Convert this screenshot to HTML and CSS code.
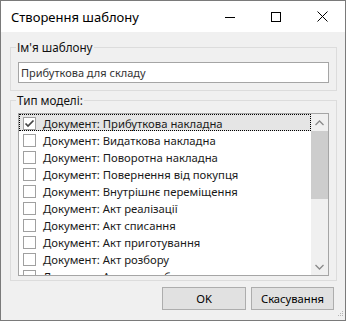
FILE: index.html
```html
<!DOCTYPE html>
<html lang="uk">
<head>
<meta charset="utf-8">
<title>Створення шаблону</title>
<link rel="stylesheet" href="styles.css">
</head>
<body>
<div class="window">
  <div class="titlebar">
    <span class="title">Створення шаблону</span>
    <div class="controls">
      <span class="ctl"><svg width="10" height="10" viewBox="0 0 10 10"><line x1="0" y1="5.5" x2="10" y2="5.5" stroke="#000" stroke-width="1"/></svg></span>
      <span class="ctl"><svg width="10" height="10" viewBox="0 0 10 10"><rect x="0.5" y="0.5" width="9" height="9" fill="none" stroke="#000" stroke-width="1"/></svg></span>
      <span class="ctl"><svg width="11" height="11" viewBox="0 0 11 11"><path d="M0.5 0.5 L10.5 10.5 M10.5 0.5 L0.5 10.5" stroke="#000" stroke-width="1" fill="none"/></svg></span>
    </div>
  </div>
  <div class="content">
    <fieldset class="group group-name">
      <legend>Ім'я шаблону</legend>
      <input class="textbox" type="text" value="Прибуткова для складу">
    </fieldset>
    <fieldset class="group group-type">
      <legend>Тип моделі:</legend>
      <div class="listbox">
        <div class="items">
          <div class="row selected"><span class="cb"><svg width="11" height="11" viewBox="0 0 11 11"><path d="M1.5 5.5 L4 8 L9.5 2.5" stroke="#444" stroke-width="1.7" fill="none"/></svg></span><span class="label">Документ: Прибуткова накладна</span></div>
          <div class="row"><span class="cb"></span><span class="label">Документ: Видаткова накладна</span></div>
          <div class="row"><span class="cb"></span><span class="label">Документ: Поворотна накладна</span></div>
          <div class="row"><span class="cb"></span><span class="label">Документ: Повернення від покупця</span></div>
          <div class="row"><span class="cb"></span><span class="label">Документ: Внутрішнє переміщення</span></div>
          <div class="row"><span class="cb"></span><span class="label">Документ: Акт реалізації</span></div>
          <div class="row"><span class="cb"></span><span class="label">Документ: Акт списання</span></div>
          <div class="row"><span class="cb"></span><span class="label">Документ: Акт приготування</span></div>
          <div class="row"><span class="cb"></span><span class="label">Документ: Акт розбору</span></div>
          <div class="row"><span class="cb"></span><span class="label">Документ: Акт переробки</span></div>
        </div>
        <div class="scrollbar">
          <div class="sb-arrow"><svg width="9" height="6" viewBox="0 0 9 6"><path d="M0.5 5 L4.5 1 L8.5 5" stroke="#8a8a8a" stroke-width="1.3" fill="none"/></svg></div>
          <div class="sb-thumb"></div>
          <div class="sb-track"></div>
          <div class="sb-arrow"><svg width="9" height="6" viewBox="0 0 9 6"><path d="M0.5 1 L4.5 5 L8.5 1" stroke="#8a8a8a" stroke-width="1.3" fill="none"/></svg></div>
        </div>
      </div>
    </fieldset>
    <div class="buttons">
      <button class="btn btn-ok" type="button">OK</button>
      <button class="btn btn-cancel" type="button">Скасування</button>
    </div>
  </div>
  <svg class="grip" width="8" height="8" viewBox="0 0 8 8">
    <rect x="6" y="0" width="1" height="1" fill="#b5b5b5"/>
    <rect x="4" y="2" width="1" height="1" fill="#b5b5b5"/>
    <rect x="6" y="2" width="1" height="1" fill="#b5b5b5"/>
    <rect x="2" y="4" width="1" height="1" fill="#b5b5b5"/>
    <rect x="4" y="4" width="1" height="1" fill="#b5b5b5"/>
    <rect x="6" y="4" width="1" height="1" fill="#b5b5b5"/>
  </svg>
</div>
</body>
</html>
```

FILE: styles.css
```css
* { box-sizing: border-box; }

html, body {
  margin: 0;
  padding: 0;
  background: #ffffff;
}

body {
  font-family: "Noto Sans", "Open Sans", sans-serif;
  font-size: 12px;
  color: #000;
}

.window {
  position: relative;
  width: 346px;
  height: 321px;
  border: 1px solid #7a7a7a;
  display: flex;
  flex-direction: column;
  background: #f0f0f0;
}

.titlebar {
  height: 31px;
  background: #ffffff;
  display: flex;
  align-items: center;
  flex-shrink: 0;
}

.title {
  padding-left: 10px;
  flex: 1;
  font-size: 13px;
  line-height: 16px;
  color: #000;
}

.controls {
  display: flex;
  height: 31px;
}

.ctl {
  width: 46px;
  height: 31px;
  display: flex;
  align-items: center;
  justify-content: center;
}

.content {
  flex: 1;
  display: flex;
  flex-direction: column;
  padding: 7px 8px 0 9px;
}

.group {
  margin: 0;
  border: 1px solid #dcdcdc;
  min-width: 0;
}

.group legend {
  padding: 0 1px;
  margin-left: -2px;
  font-size: 11.7px;
  line-height: 16px;
  height: 16px;
  color: #111;
}

.group-name {
  padding: 7px 7px 7px 7px;
}

.textbox {
  display: block;
  width: 311px;
  height: 21px;
  margin: 0;
  border: 1px solid #a5a5a5;
  padding: 0 0 0 2px;
  font-family: inherit;
  font-size: 11px;
  color: #333;
  background: #fff;
  outline: none;
}

.group-type {
  margin-top: 1px;
  padding: 5px 7px 4px 7px;
}

.listbox {
  display: flex;
  height: 163px;
  border: 1px solid #a5a5a5;
  background: #fff;
  overflow: hidden;
}

.items {
  width: 292px;
  overflow: hidden;
}

.row {
  height: 17px;
  display: flex;
  align-items: flex-start;
  padding-left: 4px;
  white-space: nowrap;
}

.row.selected {
  background: #e5e5e5;
  outline: 1px dotted #000;
  outline-offset: -1px;
}

.cb {
  width: 13px;
  height: 13px;
  margin-top: 3px;
  border: 1px solid #a0a0a0;
  background: #fff;
  display: flex;
  align-items: center;
  justify-content: center;
  flex-shrink: 0;
}

.label {
  margin-left: 7px;
  margin-top: 1px;
  font-size: 11.3px;
  line-height: 17px;
  color: #1a1a1a;
}

.scrollbar {
  width: 17px;
  display: flex;
  flex-direction: column;
  background: #f0f0f0;
}

.sb-arrow {
  height: 17px;
  display: flex;
  align-items: center;
  justify-content: center;
  flex-shrink: 0;
}

.sb-thumb {
  height: 68px;
  background: #cdcdcd;
  flex-shrink: 0;
}

.sb-track {
  flex: 1;
}

.buttons {
  display: flex;
  justify-content: flex-end;
  gap: 5px;
  margin-top: 6px;
  padding-right: 3px;
}

.btn {
  height: 23px;
  margin: 0;
  padding: 0;
  border: 1px solid #adadad;
  background: #e1e1e1;
  font-family: inherit;
  font-size: 11.2px;
  color: #000;
}

.btn-ok { width: 84px; }
.btn-cancel { width: 83px; }

.grip {
  position: absolute;
  right: 1px;
  bottom: 1px;
}
```
